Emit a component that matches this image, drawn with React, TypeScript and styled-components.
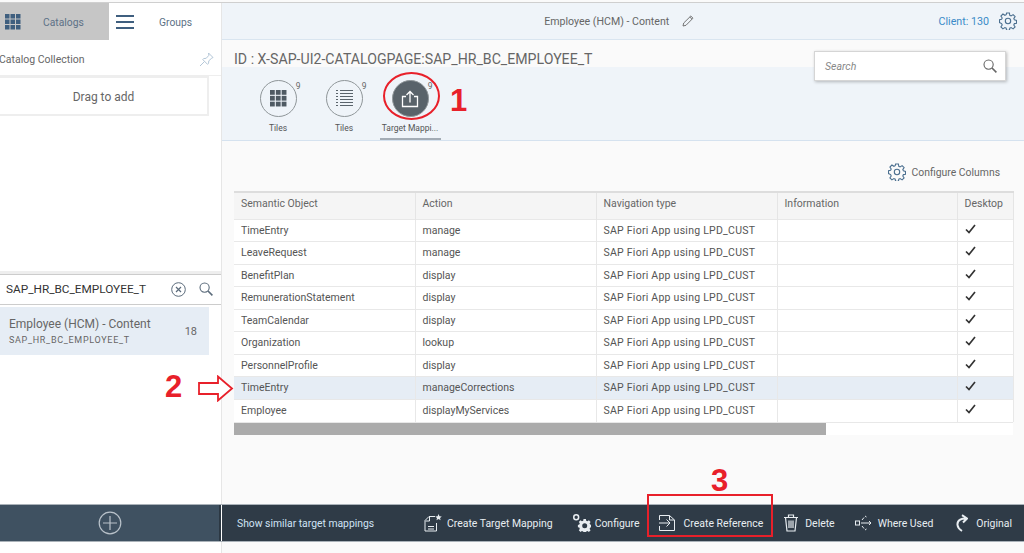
import styled, { createGlobalStyle } from "styled-components";

const rows = [
  ["TimeEntry", "manage"],
  ["LeaveRequest", "manage"],
  ["BenefitPlan", "display"],
  ["RemunerationStatement", "display"],
  ["TeamCalendar", "display"],
  ["Organization", "lookup"],
  ["PersonnelProfile", "display"],
  ["TimeEntry", "manageCorrections"],
  ["Employee", "displayMyServices"],
];

const GridIcon = ({ size = 16, color = "#3f5f7f" }: { size?: number; color?: string }) => (
  <svg width={size} height={size} viewBox="0 0 16 16" fill={color}>
    {[0, 5.5, 11].map((y) =>
      [0, 5.5, 11].map((x) => <rect key={`${x}-${y}`} x={x} y={y} width="4.5" height="4.5" />)
    )}
  </svg>
);

const SearchIcon = ({ color = "#666" }: { color?: string }) => (
  <svg width="14" height="14" viewBox="0 0 14 14" fill="none" stroke={color} strokeWidth="1.1">
    <circle cx="5.6" cy="5.6" r="4.6" />
    <path d="M9 9l4.4 4.4" strokeWidth="1.6" />
  </svg>
);

const GearIcon = ({ color }: { color: string }) => (
  <svg width="18" height="18" viewBox="0 0 18 18" fill="none" stroke={color} strokeWidth="1.1">
    <circle cx="9" cy="9" r="2.7" />
    <path d="M7.6 1h2.8l.4 2.3 1.3.6 2-1.3 2 2-1.3 2 .6 1.3 2.1.5v2.8l-2.1.4-.6 1.4 1.3 1.9-2 2-2-1.3-1.3.6-.4 2.2H7.6l-.4-2.2-1.3-.6-2 1.3-2-2 1.3-1.9-.6-1.4L.5 10.600V7.800l2.100-.5.6-1.300-1.300-2 2-2 2 1.300 1.300-.6z" />
  </svg>
);

const Check = () => (
  <svg width="11" height="10" viewBox="0 0 11 10" fill="none" stroke="#333" strokeWidth="1.7">
    <path d="M1 5.500l3 3L10 1" />
  </svg>
);

export default function App() {
  return (
    <>
      <Global />
      <Page>
        <TopStrip />
        <Main>
          <Side>
            <SideTabs>
              <SideTab $active>
                <GridIcon />
                <SideTabLabel $left={22}>Catalogs</SideTabLabel>
              </SideTab>
              <SideTab>
                <svg width="18" height="14" viewBox="0 0 18 14" fill="#3f5f7f">
                  <rect y="0" width="18" height="2" />
                  <rect y="6" width="18" height="2" />
                  <rect y="12" width="18" height="2" />
                </svg>
                <SideTabLabel $left={25}>Groups</SideTabLabel>
              </SideTab>
            </SideTabs>
            <CollectionRow>
              <CollectionTitle>Catalog Collection</CollectionTitle>
              <svg width="15" height="15" viewBox="0 0 15 15" fill="none" stroke="#b4c7d8" strokeWidth="1">
                <path d="M9.500 1l4.500 4.500-1.200.6-3 2.700-.3 2.700-1 .8L3.800 7.600l.8-1 2.600-.3 2.700-3z" />
                <path d="M5.500 9.500L1 14" />
              </svg>
            </CollectionRow>
            <DropBox>Drag to add</DropBox>
            <SearchBand>
              <SearchValue>SAP_HR_BC_EMPLOYEE_T</SearchValue>
              <svg width="15" height="15" viewBox="0 0 15 15" fill="none" stroke="#5b6b7b" strokeWidth="1">
                <circle cx="7.500" cy="7.500" r="6.800" />
                <path d="M5 5l5 5M10 5l-5 5" strokeWidth="1.200" />
              </svg>
              <SideSearchIcon>
                <SearchIcon color="#5b6b7b" />
              </SideSearchIcon>
            </SearchBand>
            <CatalogItem>
              <div>
                <CatalogTitle>Employee (HCM) - Content</CatalogTitle>
                <CatalogSub>SAP_HR_BC_EMPLOYEE_T</CatalogSub>
              </div>
              <CatalogCount>18</CatalogCount>
            </CatalogItem>
          </Side>
          <Content>
            <Header>
              <HeaderTitle>
                Employee (HCM) - Content
                <svg width="12" height="12" viewBox="0 0 12 12" fill="none" stroke="#666" strokeWidth="0.9">
                  <path d="M1 11l.7-3L8.800 1l2.200 2.200L4 10.300zM7.800 2l2.200 2.200" />
                </svg>
              </HeaderTitle>
              <Client>Client: 130</Client>
              <GearIcon color="#4b6f8f" />
            </Header>
            <IdRow>ID : X-SAP-UI2-CATALOGPAGE:SAP_HR_BC_EMPLOYEE_T</IdRow>
            <IconBar>
              <IconTab>
                <Circle>
                  <GridIcon size={17} color="#4f5a63" />
                  <Count>9</Count>
                </Circle>
                <TabLabel>Tiles</TabLabel>
              </IconTab>
              <IconTab>
                <Circle>
                  <svg width="17" height="17" viewBox="0 0 17 17" fill="#5a646c">
                    {[0, 3, 6, 9, 12, 15].map((y) => (
                      <g key={y}>
                        <rect x="0" y={y} width="2" height="1" />
                        <rect x="4" y={y} width="13" height="1" />
                      </g>
                    ))}
                  </svg>
                  <Count>9</Count>
                </Circle>
                <TabLabel>Tiles</TabLabel>
              </IconTab>
              <IconTab $selected>
                <Circle $filled>
                  <svg width="18" height="18" viewBox="0 0 18 18" fill="none" stroke="#fff" strokeWidth="1.300">
                    <path d="M5 6.500H1.500v10h15v-10H13M9 12.500V1.500M5.500 5L9 1.500 12.500 5" />
                  </svg>
                  <Count>9</Count>
                </Circle>
                <TabLabel>Target Mappi...</TabLabel>
              </IconTab>
            </IconBar>
            <TableArea>
              <ConfigureRow>
                <GearIcon color="#4b6f8f" />
                Configure Columns
              </ConfigureRow>
              <Table>
                <colgroup>
                  <col width="181" />
                  <col width="181" />
                  <col width="181" />
                  <col width="180" />
                  <col width="56" />
                </colgroup>
                <thead>
                  <tr>
                    <Th>Semantic Object</Th>
                    <Th>Action</Th>
                    <Th>Navigation type</Th>
                    <Th>Information</Th>
                    <Th>Desktop</Th>
                  </tr>
                </thead>
                <tbody>
                  {rows.map(([object, action], i) => (
                    <Tr key={i} $selected={i === 7}>
                      <Td>{object}</Td>
                      <Td>{action}</Td>
                      <Td $spaced>SAP Fiori App using LPD_CUST</Td>
                      <Td />
                      <Td>
                        <Check />
                      </Td>
                    </Tr>
                  ))}
                </tbody>
              </Table>
              <ScrollTrack>
                <ScrollThumb />
              </ScrollTrack>
            </TableArea>
          </Content>
        </Main>
        <Footer>
          <FooterLeft>
            <svg width="24" height="24" viewBox="0 0 24 24" fill="none" stroke="#b9c2ca" strokeWidth="1.200">
              <circle cx="12" cy="12" r="10.800" />
              <path d="M12 5v14M5 12h14" />
            </svg>
          </FooterLeft>
          <FooterRight>
            <SimilarLink>Show similar target mappings</SimilarLink>
            <FooterActions>
              <Action $before={0} $iconGap={5}>
                <svg width="18" height="18" viewBox="0 0 18 18" fill="none" stroke="#e8edf1" strokeWidth="1">
                  <path d="M11 2.500H5L1 6.500V17h11.500V9M1.500 7H5.500V2.500M4 12.500h6M4 15h6" />
                  <path d="M14.500 0l1 2.200 2.300.2-1.800 1.500.6 2.300-2.100-1.200-2 1.200.5-2.300-1.700-1.500 2.300-.2z" fill="#e8edf1" stroke="none" />
                </svg>
                Create Target Mapping
              </Action>
              <Action $before={20} $iconGap={4}>
                <svg width="18" height="18" viewBox="0 0 18 18" fill="#e8edf1">
                  <path d="M10.500 5h2.400l.3 1.700 1.300.5 1.400-1 1.700 1.700-1 1.400.5 1.300 1.400.3v2.400l-1.400.3-.5 1.300 1 1.400-1.700 1.700-1.400-1-1.300.5-.3 1.300h-2.400l-.3-1.300-1.300-.5-1.400 1-1.700-1.700 1-1.400-.5-1.300-1.400-.3v-2.400l1.400-.3.5-1.300-1-1.400 1.700-1.700 1.400 1 1.300-.5zm1.200 4.300a2.500 2.500 0 100 5 2.500 2.500 0 000-5z" />
                  <path d="M3.200 0a3.200 3.200 0 110 6.400 3.200 3.200 0 010-6.400zm0 1.500a1.700 1.700 0 100 3.400 1.700 1.700 0 000-3.400z" />
                </svg>
                Configure
              </Action>
              <Action $before={18} $iconGap={8}>
                <svg width="18" height="18" viewBox="0 0 18 18" fill="none" stroke="#e8edf1" strokeWidth="1">
                  <path d="M1.500 6V1.500h10l5 4.500v10.500h-15V12M1 9h11M8.500 5.500L12 9l-3.500 3.500M11.500 1.500V6h5" />
                </svg>
                Create Reference
              </Action>
              <Action $before={20} $iconGap={6}>
                <svg width="16" height="18" viewBox="0 0 16 18" fill="none" stroke="#e8edf1" strokeWidth="1.200">
                  <path d="M1 3.500h14M5.500 3.500V1h5v2.500M2.500 3.500L4 17h8l1.500-13.500M6 6.500V14M8 6.500V14M10 6.500V14" />
                </svg>
                Delete
              </Action>
              <Action $before={20} $iconGap={6}>
                <svg width="17" height="16" viewBox="0 0 17 16" fill="none" stroke="#e8edf1" strokeWidth="1">
                  <rect x="0.500" y="6" width="4" height="4" />
                  <path d="M6 8h10M14 6l2 2-2 2M7 5l2-2.500M10 1l1.500 1M7 11l2 2.500M10 15l1.500-1" />
                </svg>
                Where Used
              </Action>
              <Action $before={23} $iconGap={8}>
                <svg width="12" height="18" viewBox="0 0 12 18" fill="none" stroke="#e8edf1" strokeWidth="2">
                  <path d="M11 4.500C6 4 1 6 1.500 11c.3 2.500 2 4.500 4.500 6M6 1.200l5 3.300-4 4" />
                </svg>
                Original
              </Action>
            </FooterActions>
          </FooterRight>
        </Footer>
        <BottomStrip>
          <BottomLeft />
        </BottomStrip>

        <SearchBox>
          <SearchHint>Search</SearchHint>
          <SearchIcon />
        </SearchBox>

        <RedCircle />
        <Marker $x={450} $y={83}>1</Marker>
        <Marker $x={165} $y={369}>2</Marker>
        <Marker $x={711} $y={463}>3</Marker>
        <ArrowMark width="36" height="27" viewBox="0 0 36 27" fill="#fff" stroke="#e8202a" strokeWidth="1.800">
          <path d="M1 8h19V1.500L34 13.500 20 25.500V19H1z" />
        </ArrowMark>
        <RedBox />
      </Page>
    </>
  );
}

const Global = createGlobalStyle`
  html, body {
    margin: 0;
    padding: 0;
    background: #fff;
  }
  body {
    font-family: "Roboto", "Liberation Sans", Arial, sans-serif;
    overflow: hidden;
  }
`;

const Page = styled.div`
  position: relative;
  width: 1024px;
  height: 553px;
  display: flex;
  flex-direction: column;
  overflow: hidden;
`;

const TopStrip = styled.div`
  height: 3px;
  flex: none;
  box-sizing: border-box;
  background: #fafafa;
  border-bottom: 1px solid #cfcfcf;
`;

const Main = styled.div`
  display: flex;
  height: 501px;
  flex: none;
`;

const Side = styled.aside`
  width: 222px;
  flex: none;
  box-sizing: border-box;
  border-right: 1px solid #e6e6e6;
  background: #fff;
`;

const SideTabs = styled.div`
  display: flex;
  height: 37px;
`;

const SideTab = styled.div<{ $active?: boolean }>`
  width: 109px;
  padding-left: ${({ $active }) => ($active ? "5px" : "7px")};
  padding-top: 1px;
  box-sizing: border-box;
  display: flex;
  align-items: center;
  background: ${({ $active }) => ($active ? "#c6c6c6" : "#fff")};
`;

const SideTabLabel = styled.span<{ $left: number }>`
  margin-left: ${({ $left }) => $left}px;
  color: #5c7186;
  font-size: 10.300px;
`;

const CollectionRow = styled.div`
  height: 36px;
  box-sizing: border-box;
  padding: 4px 7px 0 0;
  display: flex;
  align-items: center;
  justify-content: space-between;
  border-bottom: 1px solid #eee;
  color: #666;
`;

const CollectionTitle = styled.span`
  margin-left: -1px;
  font-size: 10.500px;
`;

const DropBox = styled.div`
  margin: 0 12px 0 -2px;
  height: 40px;
  box-sizing: border-box;
  padding-top: 2px;
  border: 2px solid #eee;
  display: flex;
  align-items: center;
  justify-content: center;
  color: #666;
  font-size: 12px;
`;

const SearchBand = styled.div`
  margin-top: 155px;
  height: 34px;
  box-sizing: border-box;
  padding: 0 8px 0 6px;
  display: flex;
  align-items: center;
  border-top: 3px solid #eee;
  border-bottom: 1px solid #ccc;
  box-shadow: inset 0 1px 0 #ccc;
`;

const SearchValue = styled.span`
  flex: 1;
  color: #333;
  font-size: 11.800px;
`;

const SideSearchIcon = styled.span`
  display: flex;
  margin-left: 13px;
`;

const CatalogItem = styled.div`
  margin: 2px 12px 0 0;
  height: 48px;
  box-sizing: border-box;
  padding: 0 12px 0 9px;
  display: flex;
  align-items: center;
  justify-content: space-between;
  background: #e6edf5;
`;

const CatalogTitle = styled.div`
  color: #666;
  font-size: 12px;
  line-height: 15px;
`;

const CatalogSub = styled.div`
  margin-top: 3px;
  color: #666;
  font-size: 9px;
  letter-spacing: 0.7px;
  line-height: 11px;
`;

const CatalogCount = styled.span`
  color: #666;
  font-size: 11px;
`;

const Content = styled.main`
  flex: 1;
  min-width: 0;
  display: flex;
  flex-direction: column;
  background: #fafafa;
`;

const Header = styled.header`
  height: 37px;
  flex: none;
  box-sizing: border-box;
  padding: 0 7px 0 0;
  display: flex;
  align-items: center;
  background: #eff4f9;
  border-bottom: 1px solid #d9e5f0;
`;

const HeaderTitle = styled.div`
  flex: 1;
  display: flex;
  align-items: center;
  justify-content: center;
  gap: 13px;
  margin-left: 78px;
  color: #666;
  font-size: 10.600px;
`;

const Client = styled.span`
  margin-right: 10px;
  color: #3a8bc8;
  font-size: 10.700px;
`;

const IdRow = styled.div`
  height: 27px;
  flex: none;
  padding: 11px 0 0 12px;
  box-sizing: border-box;
  color: #666;
  font-size: 14.150px;
  line-height: 16px;
  white-space: nowrap;
`;

const IconBar = styled.div`
  height: 74px;
  flex: none;
  box-sizing: border-box;
  padding-left: 23px;
  display: flex;
  background: #eff4f9;
  border-bottom: 1px solid #d5e2ef;
`;

const IconTab = styled.div<{ $selected?: boolean }>`
  width: 66px;
  display: flex;
  flex-direction: column;
  align-items: center;
  padding-top: 13px;
  box-sizing: border-box;
  border-bottom: 3px solid transparent;
  position: relative;
  &::after {
    content: "";
    display: ${({ $selected }) => ($selected ? "block" : "none")};
    position: absolute;
    left: 3px;
    right: 2px;
    bottom: -3px;
    height: 2px;
    background: #a3acb5;
  }
`;

const Circle = styled.div<{ $filled?: boolean }>`
  position: relative;
  width: 37px;
  height: 37px;
  box-sizing: border-box;
  border-radius: 50%;
  display: flex;
  align-items: center;
  justify-content: center;
  border: 1px solid #8f9699;
  background: ${({ $filled }) => ($filled ? "#59636a" : "transparent")};
`;

const Count = styled.span`
  position: absolute;
  top: 0;
  right: -5px;
  color: #666;
  font-size: 8.500px;
`;

const TabLabel = styled.span`
  margin-top: 6px;
  color: #555;
  font-size: 8.500px;
  white-space: nowrap;
`;

const TableArea = styled.div`
  padding: 22px 0 0 12px;
`;

const ConfigureRow = styled.div`
  height: 18px;
  padding-right: 24px;
  display: flex;
  align-items: center;
  justify-content: flex-end;
  gap: 6px;
  color: #666;
  font-size: 10.400px;
`;

const Table = styled.table`
  margin-top: 10px;
  width: 779px;
  table-layout: fixed;
  border-collapse: collapse;
  background: #fff;
  border-top: 2px solid #ddd;
`;

const Th = styled.th`
  height: 27px;
  box-sizing: border-box;
  padding: 0 6px 5px 7px;
  background: #f5f5f5;
  border-right: 1px solid #e5e5e5;
  color: #666;
  font-size: 10.500px;
  font-weight: 400;
  text-align: left;
  white-space: nowrap;
`;

const Tr = styled.tr<{ $selected?: boolean }>`
  background: ${({ $selected }) => ($selected ? "#e6edf5" : "#fff")};
`;

const Td = styled.td<{ $spaced?: boolean }>`
  height: 22.500px;
  box-sizing: border-box;
  padding: 0 6px 0 7px;
  border-top: 1px solid #e8e8e8;
  border-right: 1px solid #e8e8e8;
  color: #555;
  font-size: 10.500px;
  letter-spacing: ${({ $spaced }) => ($spaced ? "0.25px" : "0")};
  white-space: nowrap;
`;

const ScrollTrack = styled.div`
  width: 779px;
  height: 13px;
  background: #fff;
  border-top: 1px solid #e8e8e8;
  box-sizing: border-box;
`;

const ScrollThumb = styled.div`
  width: 592px;
  height: 12px;
  background: #ababab;
`;

const Footer = styled.footer`
  display: flex;
  height: 38px;
  flex: none;
  box-sizing: border-box;
  border-top: 1px solid #aab2b9;
  border-bottom: 1px solid #aab2b9;
`;

const FooterLeft = styled.div`
  width: 219px;
  flex: none;
  display: flex;
  align-items: center;
  justify-content: center;
  background: #3f5161;
  border-right: 2px solid #2c3843;
`;

const FooterRight = styled.div`
  flex: 1;
  margin-left: 1px;
  padding: 0 12px 0 15px;
  display: flex;
  align-items: center;
  justify-content: space-between;
  background: #2f3b47;
`;

const SimilarLink = styled.span`
  color: #cfe3f5;
  font-size: 10.350px;
`;

const FooterActions = styled.div`
  display: flex;
  align-items: center;
`;

const Action = styled.div<{ $iconGap: number; $before: number }>`
  display: flex;
  align-items: center;
  gap: ${({ $iconGap }) => $iconGap}px;
  margin-left: ${({ $before }) => $before}px;
  color: #e8edf1;
  font-size: 10.450px;
  white-space: nowrap;
`;

const BottomStrip = styled.div`
  flex: 1;
  background: #fafafa;
`;

const BottomLeft = styled.div`
  width: 222px;
  height: 100%;
  box-sizing: border-box;
  background: #fff;
  border-right: 1px solid #e6e6e6;
`;

const SearchBox = styled.div`
  position: absolute;
  left: 814px;
  top: 51px;
  width: 192px;
  height: 30px;
  box-sizing: border-box;
  padding: 0 8px 0 10px;
  display: flex;
  align-items: center;
  justify-content: space-between;
  background: #fff;
  border: 1px solid #d5d5d5;
  box-shadow: 1px 1px 3px rgb(0 0 0 / 0.25);
`;

const SearchHint = styled.span`
  color: #888;
  font-size: 10.500px;
  font-style: italic;
`;

const RedCircle = styled.div`
  position: absolute;
  left: 383px;
  top: 72px;
  width: 57px;
  height: 48px;
  box-sizing: border-box;
  border: 2px solid #e8202a;
  border-radius: 50%;
`;

const Marker = styled.span<{ $x: number; $y: number }>`
  position: absolute;
  left: ${({ $x }) => $x}px;
  top: ${({ $y }) => $y}px;
  color: #e8202a;
  font-family: "Liberation Sans", Arial, sans-serif;
  font-size: 31px;
  font-weight: 700;
  line-height: 36px;
`;

const ArrowMark = styled.svg`
  position: absolute;
  left: 198px;
  top: 375px;
`;

const RedBox = styled.div`
  position: absolute;
  left: 647px;
  top: 494px;
  width: 126px;
  height: 43px;
  box-sizing: border-box;
  border: 2px solid #e8202a;
`;
